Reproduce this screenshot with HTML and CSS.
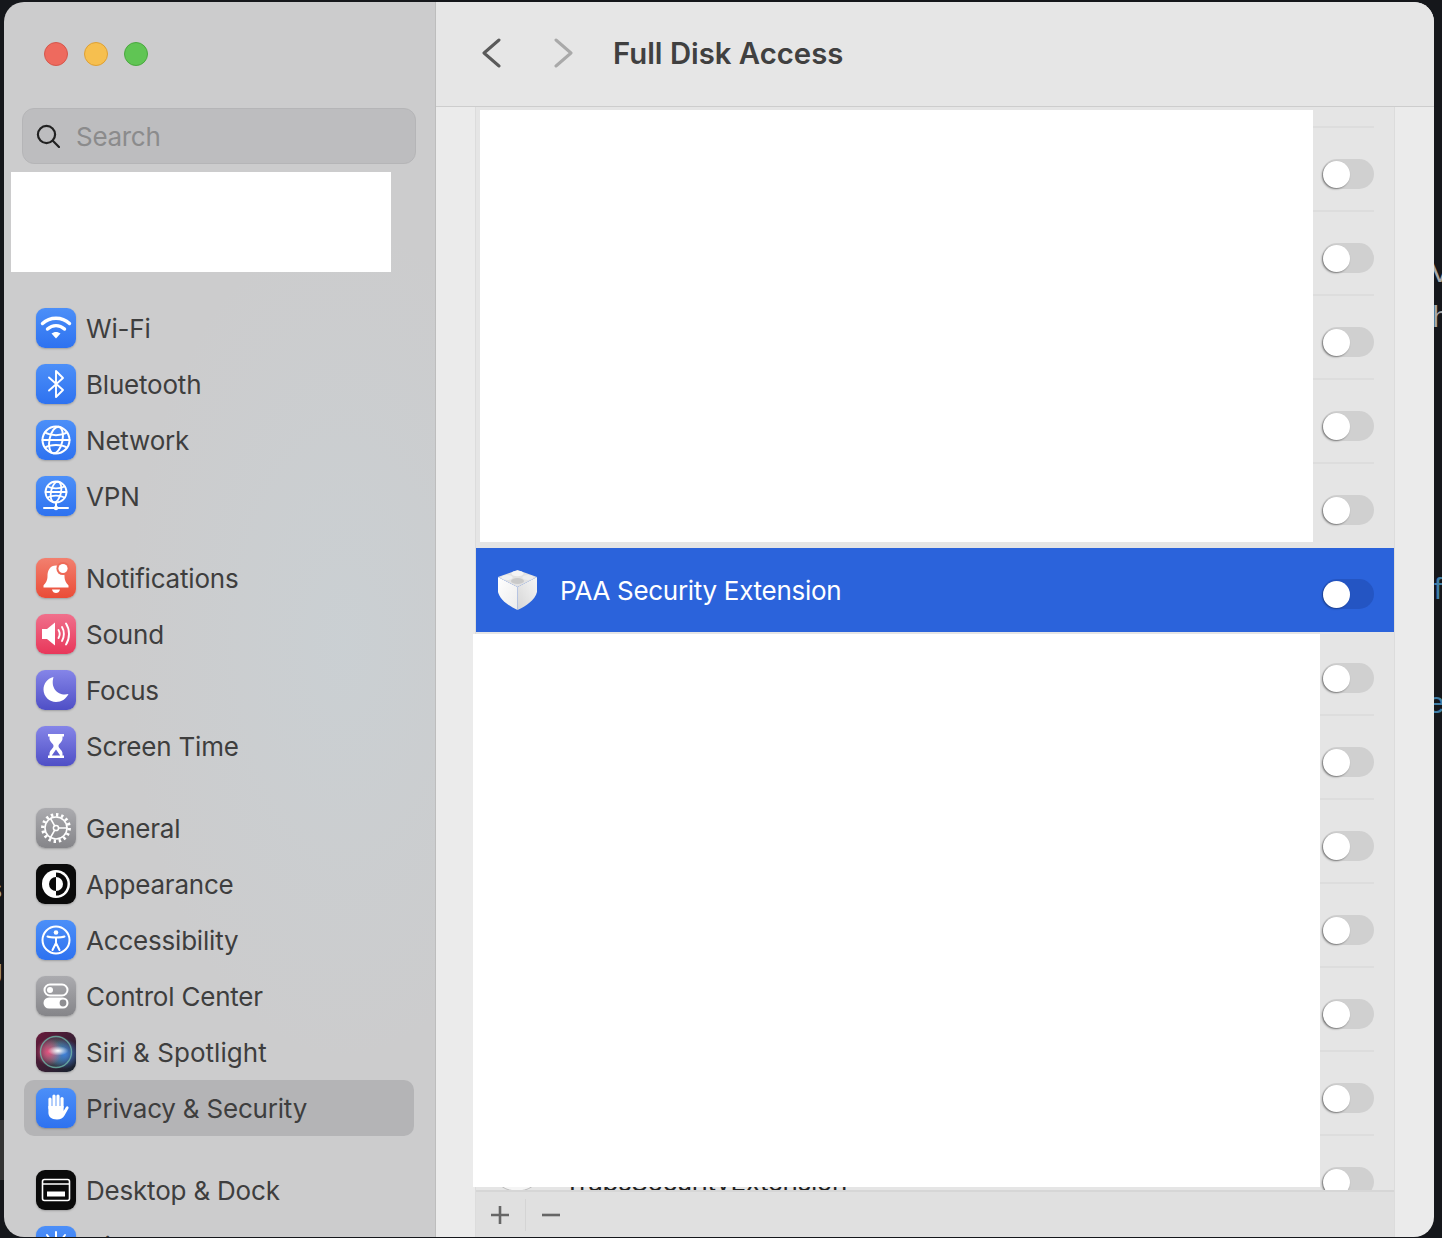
FILE: index.html
```html
<!DOCTYPE html>
<html lang="en">
<head>
<meta charset="utf-8">
<title>Full Disk Access</title>
<link rel="stylesheet" href="styles.css">
</head>
<body>
<span class="peek peek-v">V</span>
<span class="peek peek-t">th</span>
<span class="peek peek-f">f</span>
<span class="peek peek-e">e</span>
<span class="peek peek-u">u</span>
<span class="peek peek-s">s</span>
<span class="peek peek-g">g</span>
<span class="peek-block"></span>
<div class="window">
  <aside class="sidebar">
    <div class="lights"><i class="light red"></i><i class="light yellow"></i><i class="light green"></i></div>
    <div class="search">
      <svg class="search-icon" viewBox="0 0 24 24" width="24" height="24"><circle cx="10.5" cy="10.5" r="8.6"/><path d="M16.8 16.8 23 23"/></svg>
      <span class="search-text">Search</span>
    </div>
    <div class="account-mask"></div>
    <nav class="nav">
      <div class="group">
        <div class="item"><span class="icon blue"><svg viewBox="0 0 40 40"><g class="line" stroke-width="3.4"><path d="M6.5 15.5C14 8.5 26 8.5 33.5 15.5"/><path d="M11.5 21C16.5 16.5 23.5 16.5 28.5 21"/></g><path class="solid" d="M20 30.5 15.5 25.6C18 23.5 22 23.5 24.5 25.6Z"/></svg></span>Wi-Fi</div>
        <div class="item"><span class="icon blue"><svg viewBox="0 0 40 40"><path class="line" stroke-width="1.9" d="M13 13.5 27 26 20 33V7L27 14 13 26.5"/></svg></span>Bluetooth</div>
        <div class="item"><span class="icon blue"><svg viewBox="0 0 40 40"><g class="line" stroke-width="2"><circle cx="20" cy="20" r="13.5"/><ellipse cx="20" cy="20" rx="6.5" ry="13.5" transform="rotate(12 20 20)"/><path d="M9 12.5C15 16 25 16 31 12.5M6.5 20H33.5M9 27.5C15 24 25 24 31 27.5"/></g></svg></span>Network</div>
        <div class="item"><span class="icon blue"><svg viewBox="0 0 40 40"><g class="line" stroke-width="1.8"><circle cx="20" cy="16" r="10.5"/><ellipse cx="20" cy="16" rx="5" ry="10.5" transform="rotate(12 20 16)"/><path d="M11.5 10.5C16 13 24 13 28.5 10.5M9.5 16H30.5M11.5 21.5C16 19 24 19 28.5 21.5"/><path d="M20 26.5V32M8 32H32" stroke-width="2"/></g><circle class="solid" cx="20" cy="32" r="2.2"/></svg></span>VPN</div>
      </div>
      <div class="group">
        <div class="item"><span class="icon red-grad"><svg viewBox="0 0 40 40"><path class="solid" d="M20 7.5C14 7.5 11.5 12.5 11.5 18C11.5 23 9.5 25 7.5 27.5V29.5H32.5V27.5C30.5 25 28.5 23 28.5 18C28.5 12.5 26 7.5 20 7.5Z"/><path class="solid" d="M16 31.5H24C23.5 34 21.8 35 20 35S16.5 34 16 31.5Z"/><circle cx="27" cy="10.5" r="6.6" fill="#ee6a58"/><circle class="solid" cx="27" cy="10.5" r="4.6"/></svg></span>Notifications</div>
        <div class="item"><span class="icon pink"><svg viewBox="0 0 40 40"><path class="solid" d="M6 15H11L19 8.5V31.5L11 25H6Z"/><g class="line" stroke-width="1.9"><path d="M22.5 16C24 18.5 24 21.5 22.5 24"/><path d="M26 13C28.5 17 28.5 23 26 27"/><path d="M30 9.5C34 15.5 34 24.5 30 30.5"/></g></svg></span>Sound</div>
        <div class="item"><span class="icon purple"><svg viewBox="0 0 40 40"><path class="solid" d="M17.5 7C11 8.5 7.5 14 7.5 19.5C7.5 26.5 13.5 32 20 32C25.5 32 30 29 32.5 24C23 26.5 14 19 17.5 7Z"/></svg></span>Focus</div>
        <div class="item"><span class="icon purple"><svg viewBox="0 0 40 40"><path class="solid" fill-rule="evenodd" d="M12 8H28V10.5H26.5V12.5C26.5 16 22.5 17.5 22.5 20S26.5 24 26.5 27.5V29.5H28V32H12V29.5H13.5V27.5C13.5 24 17.5 22.5 17.5 20S13.5 16 13.5 12.5V10.5H12ZM20 23.5 15.8 29.5H24.2Z"/></svg></span>Screen Time</div>
      </div>
      <div class="group">
        <div class="item"><span class="icon gray"><svg viewBox="0 0 40 40"><g class="line"><circle cx="20" cy="20" r="13.2" stroke-width="3.4" stroke-dasharray="2.4 2.75" stroke-linecap="butt"/><circle cx="20" cy="20" r="11" stroke-width="1.6"/><path stroke-width="1.6" d="M22.5 20H31M18.7 22.2 14.5 29.5M18.7 17.8 14.5 10.5"/><circle cx="20" cy="20" r="2.6" stroke-width="1.5"/></g></svg></span>General</div>
        <div class="item"><span class="icon black"><svg viewBox="0 0 40 40"><circle class="solid" cx="20" cy="20" r="14"/><path d="M20 8.5A11.5 11.5 0 0 1 20 31.5Z" fill="#0a0a0a"/><path d="M20 13A7 7 0 0 0 20 27Z" fill="#0a0a0a"/><path class="solid" d="M20 13A7 7 0 0 1 20 27Z"/></svg></span>Appearance</div>
        <div class="item"><span class="icon blue"><svg viewBox="0 0 40 40"><circle class="line" stroke-width="2" cx="20" cy="20" r="13.5"/><circle class="solid" cx="20" cy="12.5" r="2.3"/><path class="line" stroke-width="2" d="M11.5 16.5C15 17.8 25 17.8 28.5 16.5M20 17.5V23M20 23 16.5 30M20 23 23.5 30"/></svg></span>Accessibility</div>
        <div class="item"><span class="icon gray"><svg viewBox="0 0 40 40"><rect class="line" stroke-width="2" x="8.5" y="8.5" width="23" height="11" rx="5.5"/><circle class="solid" cx="14" cy="14" r="3"/><rect class="solid" x="7.5" y="21.5" width="25" height="11" rx="5.5"/><circle cx="27" cy="27" r="3.4" fill="#8e8e92"/></svg></span>Control Center</div>
        <div class="item"><span class="icon siri"><svg viewBox="0 0 40 40"><circle cx="20" cy="20" r="15.5" fill="none" stroke="#6fb7a8" stroke-width="1.4" opacity=".8"/></svg></span><span class="siri-label">Siri &amp; Spotlight</span></div>
        <div class="item active"><span class="icon blue"><svg viewBox="0 0 40 40"><g class="line" stroke-width="3.2"><path d="M14 20V11"/><path d="M18 18V8"/><path d="M22 18V8"/><path d="M26 19V10.5"/></g><path class="solid" d="M12.4 18H27.6V23L30 19C31 17.3 33.3 18.5 32.4 20.5L28.5 27.5C27 30.3 24.5 31.5 21 31.5C15 31.5 12.4 28.5 12.4 24.5Z"/></svg></span>Privacy &amp; Security</div>
      </div>
      <div class="group">
        <div class="item"><span class="icon black"><svg viewBox="0 0 40 40"><rect class="line" stroke-width="1.6" x="6.5" y="9.5" width="27" height="21" rx="2"/><path class="line" stroke-width="1.6" d="M7 14H33"/><rect class="solid" x="11" y="21.5" width="18" height="5"/></svg></span>Desktop &amp; Dock</div>
        <div class="item"><span class="icon blue"><svg viewBox="0 0 40 40"><g class="line" stroke-width="2"><path d="M20 6V11M11 9 14 13M29 9 26 13"/></g></svg></span>Displays</div>
      </div>
    </nav>
  </aside>
  <main class="main">
    <header class="topbar">
      <svg class="chev" viewBox="0 0 20 30" width="20" height="30"><path d="M18 2 3 15 18 28"/></svg>
      <svg class="chev chev-off" viewBox="0 0 20 30" width="20" height="30"><path d="M2 2 17 15 2 28"/></svg>
      <h1>Full Disk Access</h1>
    </header>
    <div class="pane">
      <div class="list">
        <div class="scroller">
          <div class="rows">
            <div class="row"><span class="toggle"><i></i></span></div>
            <div class="row"><span class="toggle"><i></i></span></div>
            <div class="row"><span class="toggle"><i></i></span></div>
            <div class="row"><span class="toggle"><i></i></span></div>
            <div class="row"><span class="toggle"><i></i></span></div>
            <div class="row before-selected"><span class="toggle"><i></i></span></div>
            <div class="row selected">
              <svg class="app" viewBox="0 0 42 42" width="42" height="42">
                <defs>
                  <linearGradient id="brickL" x1="0" y1="0" x2="1" y2="1"><stop offset="0" stop-color="#fff"/><stop offset="1" stop-color="#ececec"/></linearGradient>
                  <linearGradient id="brickR" x1="1" y1="0" x2="0" y2="1"><stop offset="0" stop-color="#f6f6f6"/><stop offset="1" stop-color="#d6d6d6"/></linearGradient>
                </defs>
                <path d="M1 8 20.5 18V41C12 37 3 31 1 23Z" fill="url(#brickL)"/>
                <path d="M40 8 20.5 18V41C29 37 38 31 40 23Z" fill="url(#brickR)"/>
                <path d="M1 8 20.5 1 40 8 20.5 18Z" fill="#e2e2e2"/>
                <ellipse cx="20.5" cy="4.5" rx="6" ry="2.8" fill="#f4f4f4"/>
                <ellipse cx="10" cy="8.5" rx="5.5" ry="2.6" fill="#f1f1f1"/>
                <ellipse cx="31" cy="8.5" rx="5.5" ry="2.6" fill="#ededed"/>
                <ellipse cx="20.5" cy="12" rx="6.5" ry="3" fill="#c9c9c9"/>
              </svg>
              <span class="name">PAA Security Extension</span>
              <span class="toggle"><i></i></span>
            </div>
            <div class="row"><span class="toggle"><i></i></span></div>
            <div class="row"><span class="toggle"><i></i></span></div>
            <div class="row"><span class="toggle"><i></i></span></div>
            <div class="row"><span class="toggle"><i></i></span></div>
            <div class="row"><span class="toggle"><i></i></span></div>
            <div class="row"><span class="toggle"><i></i></span></div>
            <div class="row">
              <svg class="app" viewBox="0 0 42 42" width="42" height="42"><ellipse cx="20" cy="21" rx="20" ry="13" fill="#f5f5f5" stroke="#bdbdbd"/></svg>
              <span class="name name-low">TrapsSecurityExtension</span>
              <span class="toggle"><i></i></span>
            </div>
          </div>
        </div>
        <footer class="actions">
          <svg class="act" viewBox="0 0 20 20" width="20" height="20"><path d="M10 1V19M1 10H19"/></svg>
          <span class="act-sep"></span>
          <svg class="act" viewBox="0 0 20 20" width="20" height="20"><path d="M1 10H19"/></svg>
        </footer>
      </div>
      <div class="mask mask-top"></div>
      <div class="mask mask-bottom"></div>
    </div>
  </main>
</div>
</body>
</html>
```

FILE: styles.css
```css
* { box-sizing: border-box; }
html, body { margin: 0; height: 1238px; overflow: hidden; }
body {
  position: relative;
  background: #15171b;
  font-family: Inter, "Liberation Sans", sans-serif;
  padding: 2px 8px 0 4px;
}
.peek {
  position: absolute;
  left: 1434px;
  font: 30px/34px "Liberation Sans", sans-serif;
  color: #a8a8a8;
}
.peek-v { top: 255px; left: 1430px; }
.peek-t { top: 300px; left: 1424px; }
.peek-f { top: 572px; color: #3f7ea6; }
.peek-e { top: 686px; left: 1428px; color: #3f7ea6; }
.peek-u { top: 268px; left: -14px; font-size: 26px; }
.peek-s { top: 872px; left: -11px; font-size: 26px; }
.peek-g { top: 952px; left: -12px; font-size: 26px; }
.peek-block { position: absolute; left: 0; top: 1120px; width: 4px; height: 60px; background: #333; }
.window {
  position: relative;
  display: flex;
  width: 1430px;
  height: 1235px;
  border-radius: 20px;
  overflow: hidden;
}
.sidebar {
  flex: 0 0 432px;
  overflow: hidden;
  background:
    radial-gradient(ellipse 220px 420px at 340px 640px, rgba(200,212,218,.45), rgba(200,212,218,0)),
    #cccccd;
  border-right: 1px solid #bdbdbd;
}
.lights { display: flex; gap: 16px; margin: 40px 0 0 40px; }
.light { width: 24px; height: 24px; border-radius: 50%; border: 1px solid; }
.red { background: #ee6a5e; border-color: #d5574c; }
.yellow { background: #f6bf4f; border-color: #dea034; }
.green { background: #60c554; border-color: #4aa83f; }
.search {
  display: flex;
  align-items: center;
  gap: 16px;
  width: 394px;
  height: 56px;
  margin: 42px 0 0 18px;
  padding-left: 13px;
  border-radius: 12px;
  border: 1px solid #b5b5b7;
  background: #bdbdbf;
  color: #8b8b8c;
  font-size: 26px;
  letter-spacing: -.3px;
}
.search-text { padding-top: 1px; }
.search-icon { fill: none; stroke: #222; stroke-width: 2.2; stroke-linecap: round; }
.account-mask { width: 380px; height: 100px; margin: 8px 0 0 7px; background: #fff; }
.nav { display: flex; flex-direction: column; gap: 26px; margin: 28px 0 0 20px; width: 390px; }
.item {
  display: flex;
  align-items: center;
  gap: 10px;
  height: 56px;
  padding-left: 12px;
  border-radius: 10px;
  font-size: 26px;
  letter-spacing: -.2px;
  color: #3e3e3e;
  white-space: nowrap;
}
.siri-label { letter-spacing: .05px; }
.active { background: #b4b4b6; }
.icon {
  flex: none;
  width: 40px;
  height: 40px;
  border-radius: 9px;
  box-shadow: 0 1px 2px rgba(0,0,0,.22);
}
.icon svg { display: block; width: 40px; height: 40px; }
.solid { fill: #fff; }
.line { fill: none; stroke: #fff; stroke-linecap: round; stroke-linejoin: round; }
.blue { background: linear-gradient(#4c8ff8, #2e72f0); }
.red-grad { background: linear-gradient(#f2806f, #ea4c37); }
.pink { background: linear-gradient(#f0708c, #e8375a); }
.purple { background: linear-gradient(#8585e8, #4f4fc6); }
.gray { background: linear-gradient(#ababaf, #858589); }
.black { background: #0a0a0a; }
.siri {
  background:
    radial-gradient(ellipse 26% 12% at 55% 47%, #fff 0, rgba(255,255,255,0) 100%),
    radial-gradient(circle at 32% 50%, #e8527f 0, rgba(232,82,127,0) 40%),
    radial-gradient(circle at 72% 55%, #3f7fd8 0, rgba(63,127,216,0) 42%),
    radial-gradient(circle at 50% 50%, #4fa8a0 0, rgba(79,168,160,0) 62%),
    linear-gradient(135deg, #6a1a3c, #12232e);
}
.main { flex: 1; display: flex; flex-direction: column; min-width: 0; background: #ebebeb; }
.topbar {
  flex: 0 0 105px;
  display: flex;
  align-items: center;
  padding: 0 0 2px 45px;
  background: #e6e6e6;
  border-bottom: 1px solid #cdcdcd;
}
.chev { flex: none; fill: none; stroke: #5a5a5a; stroke-width: 3; stroke-linecap: round; stroke-linejoin: round; margin-right: 53px; }
.chev-off { stroke: #a9a9a9; margin-right: 39px; }
.topbar h1 { margin: 0; font-size: 29.3px; font-weight: 600; color: #404040; }
.pane { position: relative; flex: 1; display: flex; min-height: 0; padding: 0 40px; }
.list {
  flex: 1;
  display: flex;
  flex-direction: column;
  min-width: 0;
  background: #e5e5e5;
  box-shadow: -1px 0 #dcdcdc, 1px 0 #dcdcdc;
}
.scroller { flex: 1; min-height: 0; overflow: hidden; }
.rows { margin-top: -63px; }
.row {
  display: flex;
  align-items: center;
  height: 84px;
  padding: 0 20px 0 21px;
  background: linear-gradient(#dddddd, #dddddd) no-repeat 84px 100% / calc(100% - 104px) 2px;
}
.before-selected { background: none; }
.selected { background: #2b63db; }
.app { flex: none; margin-right: 21px; }
.name { font-size: 26px; letter-spacing: -.3px; color: #222; }
.name-low { margin: 6px 0 0 4px; letter-spacing: -.4px; }
.selected .name { color: #fff; }
.toggle {
  display: flex;
  align-items: center;
  width: 52px;
  height: 30px;
  margin: 8px 0 0 auto;
  padding-left: 1px;
  border-radius: 15px;
  background: #d0d0d0;
}
.selected .toggle { background: #2455c3; }
.toggle i {
  width: 27px;
  height: 27px;
  border-radius: 50%;
  background: #fff;
  box-shadow: -1px 1px 2px rgba(0,0,0,.45);
}
.selected .toggle i { box-shadow: -1px 1px 2px rgba(0,0,0,.3); }
.actions {
  flex: 0 0 47px;
  display: flex;
  align-items: center;
  padding-left: 14px;
  background: #e0e0e0;
  border-top: 2px solid #d6d6d6;
}
.act { fill: none; stroke: #666; stroke-width: 2.6; flex: none; }
.act-sep { width: 1px; height: 32px; margin: 0 15px; background: #d4d4d4; }
.mask { position: absolute; background: #fff; }
.mask-top { left: 44px; top: 3px; width: 833px; height: 432px; }
.mask-bottom { left: 37px; top: 527px; width: 847px; height: 553px; }
```
